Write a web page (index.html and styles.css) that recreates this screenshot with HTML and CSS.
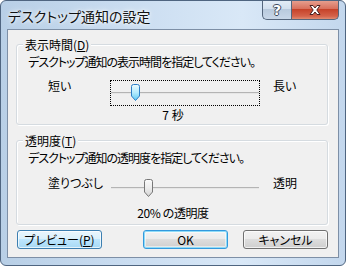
FILE: index.html
```html
<!DOCTYPE html>
<html lang="ja">
<head>
<meta charset="utf-8">
<link rel="stylesheet" href="styles.css">
</head>
<body>
<div class="window">
  <div class="titlebar">
    <span class="title">デスクトップ通知の設定</span>
    <div class="caption">
      <div class="cap help"><span class="glyph">?</span></div>
      <div class="cap close">
        <svg width="16" height="12" viewBox="0 0 16 12"><path d="M3 1.5 H6 L8 4 L10 1.5 H13 L9.8 6 L13 10.5 H10 L8 8 L6 10.5 H3 L6.2 6 Z" fill="#fff" stroke="#4a2020" stroke-width="1" stroke-linejoin="round"/></svg>
      </div>
    </div>
  </div>
  <div class="client">
    <div class="group g1">
      <span class="legend">表示時間(<u>D</u>)</span>
      <div class="desc">デスクトップ通知の表示時間を指定してください。</div>
      <div class="row r1">
        <span class="lbl">短い</span>
        <div class="slider focus">
          <div class="track"></div>
          <svg class="thumb t1" width="11" height="18" viewBox="0 0 11 18">
            <defs><linearGradient id="gb" x1="0" y1="0" x2="0" y2="1"><stop offset="0" stop-color="#eafaff"/><stop offset="0.5" stop-color="#b6ecfd"/><stop offset="1" stop-color="#5cc9f3"/></linearGradient></defs>
            <path d="M1.5 2.5 Q1.5 0.5 3.5 0.5 H7.5 Q9.5 0.5 9.5 2.5 V12 L5.5 16.5 L1.5 12 Z" fill="url(#gb)" stroke="#2f7fc6"/>
          </svg>
        </div>
        <span class="lbl rl">長い</span>
      </div>
      <div class="value v1">7 秒</div>
    </div>
    <div class="group g2">
      <span class="legend">透明度(<u>T</u>)</span>
      <div class="desc">デスクトップ通知の透明度を指定してください。</div>
      <div class="row r2">
        <span class="lbl">塗りつぶし</span>
        <div class="slider">
          <div class="track"></div>
          <svg class="thumb t2" width="11" height="19" viewBox="0 0 11 19">
            <defs><linearGradient id="gg" x1="0" y1="0" x2="0" y2="1"><stop offset="0" stop-color="#fbfbfb"/><stop offset="0.5" stop-color="#ececec"/><stop offset="1" stop-color="#d4d4d4"/></linearGradient></defs>
            <path d="M1.5 2.5 Q1.5 0.5 3.5 0.5 H7.5 Q9.5 0.5 9.5 2.5 V13 L5.5 17.5 L1.5 13 Z" fill="url(#gg)" stroke="#777"/>
          </svg>
        </div>
        <span class="lbl rl">透明</span>
      </div>
      <div class="value v2">20% の透明度</div>
    </div>
    <div class="buttons">
      <div class="btn hover">プレビュー(<u>P</u>)</div>
      <div class="btn default">OK</div>
      <div class="btn">キャンセル</div>
    </div>
  </div>
</div>
</body>
</html>
```
FILE: styles.css
```css
html, body {
  margin: 0;
  padding: 0;
  background: #ffffff;
}
body {
  font-family: "Noto Sans CJK JP", "Noto Sans", sans-serif;
  font-size: 12px;
  font-feature-settings: "palt";
  color: #000;
}
.window {
  width: 346px;
  height: 266px;
  box-sizing: border-box;
  border: 1px solid #4f6580;
  border-radius: 6px;
  background: linear-gradient(to right, #b8cfe6 0%, #c9dcf0 35%, #d9e8f7 70%, #c3d7ed 100%);
  display: flex;
  flex-direction: column;
  overflow: hidden;
}
.titlebar {
  height: 28px;
  display: flex;
  align-items: flex-start;
}
.title {
  font-size: 14px;
  line-height: 16px;
  margin-top: 7px;
  margin-left: 7px;
  color: #111;
  text-shadow: 0 0 6px #fff, 0 0 3px #fff;
}
.caption {
  margin-left: auto;
  margin-right: 6px;
  margin-top: -1px;
  display: flex;
  height: 21px;
}
.cap {
  height: 20px;
  box-sizing: border-box;
  border: 1px solid #55667c;
  border-top: none;
  display: flex;
  align-items: center;
  justify-content: center;
}
.help {
  width: 29px;
  border-radius: 0 0 0 5px;
  border-right: none;
  background: linear-gradient(to bottom, #e4edf7 0%, #d3e0ee 45%, #b9cadd 50%, #c8d7e8 100%);
}
.help .glyph {
  font-family: "DejaVu Sans", sans-serif;
  font-weight: bold;
  font-size: 14px;
  line-height: 14px;
  color: #fff;
  text-shadow: 1px 0 0 #3c4a5c, -1px 0 0 #3c4a5c, 0 1px 0 #3c4a5c, 0 -1px 0 #3c4a5c;
}
.close {
  width: 48px;
  border-radius: 0 0 5px 0;
  background: linear-gradient(to bottom, #e8a494 0%, #d9715d 45%, #c6432a 50%, #d4624a 85%, #e08c72 100%);
}
.client {
  flex: 1;
  margin: 0 6px 7px 6px;
  border: 1px solid #7d8fa6;
  background: #f0f0f0;
  display: flex;
  flex-direction: column;
  padding: 0 10px 0 8px;
}
.group {
  border: 1px solid #d5dbe0;
  border-radius: 3px;
  box-shadow: inset 1px 1px 0 #fff, 1px 1px 0 #fff;
  display: flex;
  flex-direction: column;
  line-height: 14px;
}
.g1 {
  margin-top: 14px;
  padding-bottom: 2px;
}
.g2 {
  margin-top: 15px;
  padding-bottom: 4px;
}
.legend {
  align-self: flex-start;
  margin-top: -7px;
  margin-left: 6px;
  padding: 0 2px;
  background: #f0f0f0;
}
u {
  text-decoration-thickness: 1px;
  text-underline-offset: 1px;
}
.desc {
  margin-top: 3px;
  margin-left: 11px;
  letter-spacing: -1px;
}
.row {
  display: flex;
  align-items: flex-start;
  padding-left: 31px;
  height: 26px;
}
.r1 { margin-top: 11px; }
.r2 { margin-top: 10px; }
.lbl {
  width: 62px;
  margin-top: -1px;
}
.r2 .lbl { margin-top: 1px; }
.rl {
  margin-left: 13px;
  width: auto;
}
.slider {
  position: relative;
  width: 150px;
  height: 26px;
  box-sizing: border-box;
  border: 1px dotted transparent;
  display: flex;
  align-items: center;
}
.slider.focus {
  border-color: #000;
}
.track {
  flex: 1;
  height: 1px;
  border-top: 1px solid #b4b4b4;
  background: #e6e6e6;
}
.thumb {
  position: absolute;
}
.t1 { left: 19px; top: 3px; }
.t2 { left: 32px; top: 3px; }
.value {
  margin-left: 93px;
  width: 126px;
  text-align: center;
}
.v1 { margin-top: 2px; }
.v2 { margin-top: 5px; letter-spacing: -0.4px; }
.buttons {
  display: flex;
  margin-top: 5px;
  padding-left: 1px;
}
.btn {
  width: 85px;
  height: 19px;
  box-sizing: border-box;
  border: 1px solid #707070;
  border-radius: 3px;
  background: linear-gradient(to bottom, #f2f2f2 0%, #ebebeb 50%, #dddddd 50%, #cfcfcf 100%);
  box-shadow: inset 0 0 0 1px rgba(255,255,255,0.7);
  display: flex;
  align-items: center;
  justify-content: center;
  line-height: 14px;
}
.btn.hover {
  border-color: #3c7fb1;
  background: linear-gradient(to bottom, #eaf6fd 0%, #d9f0fc 50%, #bee6fd 50%, #a7d9f5 100%);
}
.btn.default {
  margin-left: auto;
  border-color: #3399dd;
  box-shadow: inset 0 0 0 1px #8fdcf8, inset 0 0 0 2px rgba(255,255,255,0.5);
}
.btn + .btn + .btn {
  margin-left: 15px;
}
```
